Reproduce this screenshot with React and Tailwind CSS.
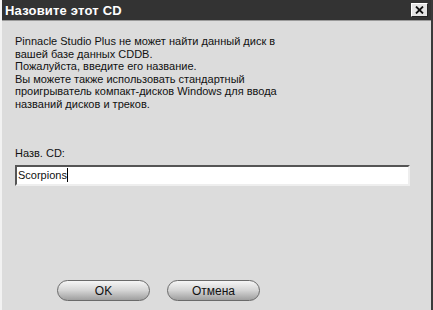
import React from 'react'

const App = () => {
    const font = { fontFamily: "'Liberation Sans', Arial, sans-serif" }

    return (
        <div className='w-[433px] h-[310px] bg-[#dcdcdc] flex flex-col border-l-2 border-l-[#f2f2f2] border-r-2 border-r-[#3a3a3a] overflow-hidden' style={font}>
            <div className='h-[21px] bg-[#333333] flex items-center justify-between pl-[3px] pr-[3px] border-b border-b-[#9a9a9a]'>
                <span className='text-white font-bold text-[13px] leading-none tracking-[0.2px]'>Назовите этот CD</span>
                <button className='w-[17px] h-[14px] bg-[#e4e4e4] border border-t-white border-l-white border-r-[#222] border-b-[#222] flex items-center justify-center'>
                    <svg width='9' height='8' viewBox='0 0 9 8'>
                        <path d='M1 0.5 L8 7.5 M8 0.5 L1 7.5' stroke='#111' strokeWidth='1.8' />
                    </svg>
                </button>
            </div>

            <div className='flex flex-col flex-1 px-[13px]'>
                <div className='mt-[14px] text-[11px] leading-[12.6px] text-[#111]'>
                    <div>Pinnacle Studio Plus не может найти данный диск в</div>
                    <div>вашей базе данных CDDB.</div>
                    <div>Пожалуйста, введите его название.</div>
                    <div>Вы можете также использовать стандартный</div>
                    <div>проигрыватель компакт-дисков Windows для ввода</div>
                    <div>названий дисков и треков.</div>
                </div>

                <div className='mt-[36px] text-[11px] leading-[12px] text-[#111]'>Назв. CD:</div>
                <div className='mt-[6px] w-[395px] h-[21px] bg-white border-2 border-t-[#555] border-l-[#555] border-r-[#eee] border-b-[#eee] flex items-center pl-[1px]'>
                    <span className='text-[11px] leading-none text-[#111]'>Scorpions</span>
                    <span className='w-px h-[14px] bg-black'></span>
                </div>

                <div className='mt-auto mb-[9px] flex gap-[17px] pl-[42px]'>
                    <button className='w-[93px] h-[21px] rounded-full border border-[#6a6a6a] bg-gradient-to-b from-[#f6f6f6] via-[#d4d4d4] to-[#9f9f9f] text-[12px] text-[#111] flex items-center justify-center'>OK</button>
                    <button className='w-[93px] h-[21px] rounded-full border border-[#6a6a6a] bg-gradient-to-b from-[#f6f6f6] via-[#d4d4d4] to-[#9f9f9f] text-[12px] text-[#111] flex items-center justify-center'>Отмена</button>
                </div>
            </div>
        </div>
    )
}

export default App
